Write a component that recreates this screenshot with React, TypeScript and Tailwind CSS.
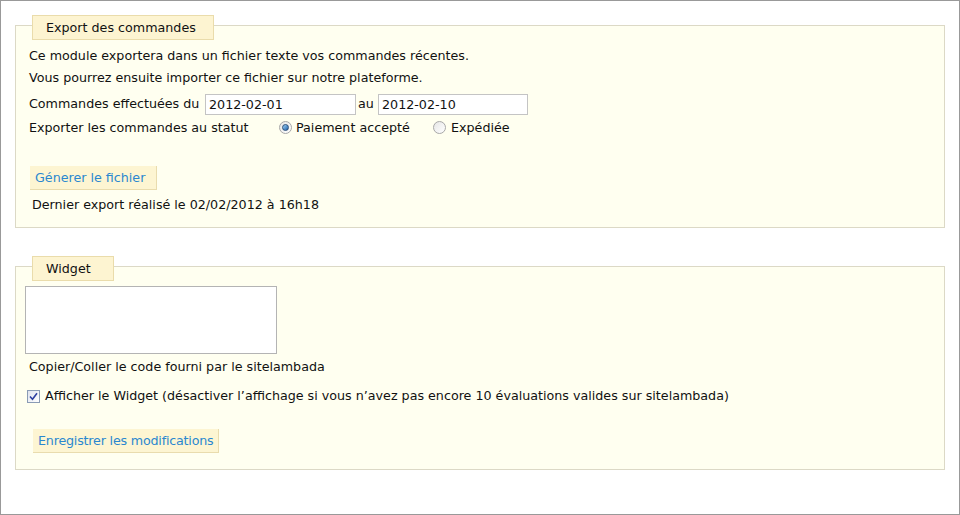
import React from 'react'

function Radio({ checked }: { checked?: boolean }) {
  return (
    <span className="inline-flex items-center justify-center w-[13px] h-[13px] rounded-full border border-[#a8a8a8] bg-gradient-to-br from-[#e6e6e6] to-[#ffffff] shrink-0">
      {checked && (
        <span className="w-[7px] h-[7px] rounded-full bg-gradient-to-br from-[#9fd3f7] to-[#1a5fa8] border border-[#2a4f7a]" />
      )}
    </span>
  )
}

function Checkbox() {
  return (
    <span className="inline-flex items-center justify-center w-[13px] h-[13px] border border-[#8a9bb5] bg-gradient-to-br from-[#dfe3ee] to-[#ffffff] shrink-0">
      <svg width="9" height="9" viewBox="0 0 9 9">
        <path d="M1 4.5 L3.5 7.2 L8 1.2" fill="none" stroke="#2d3fa0" strokeWidth="1.6" />
      </svg>
    </span>
  )
}

function Legend({ children, width }: { children: React.ReactNode; width: string }) {
  return (
    <div className={`-mt-[11px] ml-[16px] h-[25px] ${width} flex items-center pl-[13px] border border-[#eadcab] bg-[#fdf4d1] text-[#111]`}>
      {children}
    </div>
  )
}

export default function App() {
  return (
    <div
      className="w-[960px] h-[515px] border border-[#999] bg-white text-[12.7px] text-[#111] overflow-hidden"
      style={{ fontFamily: '"DejaVu Sans", Verdana, sans-serif' }}
    >
      {/* Export des commandes */}
      <div className="mt-[24px] ml-[14px] w-[930px] border border-[#dcd9c6] bg-[#fffff0] pb-[11px]">
        <Legend width="w-[182px]">Export des commandes</Legend>
        <div className="pl-[13px] pt-[5px]">
          <div className="leading-[22px]">Ce module exportera dans un fichier texte vos commandes récentes.</div>
          <div className="leading-[22px]">Vous pourrez ensuite importer ce fichier sur notre plateforme.</div>
          <div className="mt-[4px] h-[22px] flex items-center">
            <span className="w-[176px]">Commandes effectuées du</span>
            <input
              defaultValue="2012-02-01"
              className="w-[151px] h-[21px] border border-[#c4c4c4] bg-white px-[3px] text-[12.7px] text-[#111] outline-none"
            />
            <span className="ml-[2px] w-[20px]">au</span>
            <input
              defaultValue="2012-02-10"
              className="w-[150px] h-[21px] border border-[#c4c4c4] bg-white px-[3px] text-[12.7px] text-[#111] outline-none"
            />
          </div>
          <div className="mt-[2px] h-[22px] flex items-center">
            <span className="w-[250px]">Exporter les commandes au statut</span>
            <span className="w-[154px] flex items-center gap-[4px]">
              <Radio checked />
              Paiement accepté
            </span>
            <span className="flex items-center gap-[5px]">
              <Radio />
              Expédiée
            </span>
          </div>
          <button className="mt-[27px] ml-[1px] h-[24px] w-[127px] pl-[5px] pt-[2px] text-left bg-[#fdf5d2] border-r border-b border-[#e9dcae] text-[#2a87cf] text-[12.7px] leading-none">
            Génerer le fichier
          </button>
          <div className="mt-[4px] leading-[22px] pl-[3px]">Dernier export réalisé le 02/02/2012 à 16h18</div>
        </div>
      </div>

      {/* Widget */}
      <div className="mt-[38px] ml-[14px] w-[930px] border border-[#dcd9c6] bg-[#fffff0] pb-[16px]">
        <Legend width="w-[82px]">Widget</Legend>
        <div className="pl-[9px] pt-[5px]">
          <textarea className="block w-[252px] h-[68px] border border-[#b4b4b4] bg-white resize-none outline-none" />
          <div className="mt-[2px] pl-[4px] leading-[22px]">Copier/Coller le code fourni par le sitelambada</div>
          <div className="mt-[7px] h-[22px] pl-[2px] flex items-center gap-[5px]">
            <Checkbox />
            <span>Afficher le Widget (désactiver l’affichage si vous n’avez pas encore 10 évaluations valides sur sitelambada)</span>
          </div>
          <button className="mt-[22px] ml-[8px] h-[24px] w-[186px] pl-[5px] pt-[2px] text-left whitespace-nowrap tracking-[-0.2px] bg-[#fdf5d2] border-r border-b border-[#e9dcae] text-[#2a87cf] text-[12.7px] leading-none">
            Enregistrer les modifications
          </button>
        </div>
      </div>
    </div>
  )
}
